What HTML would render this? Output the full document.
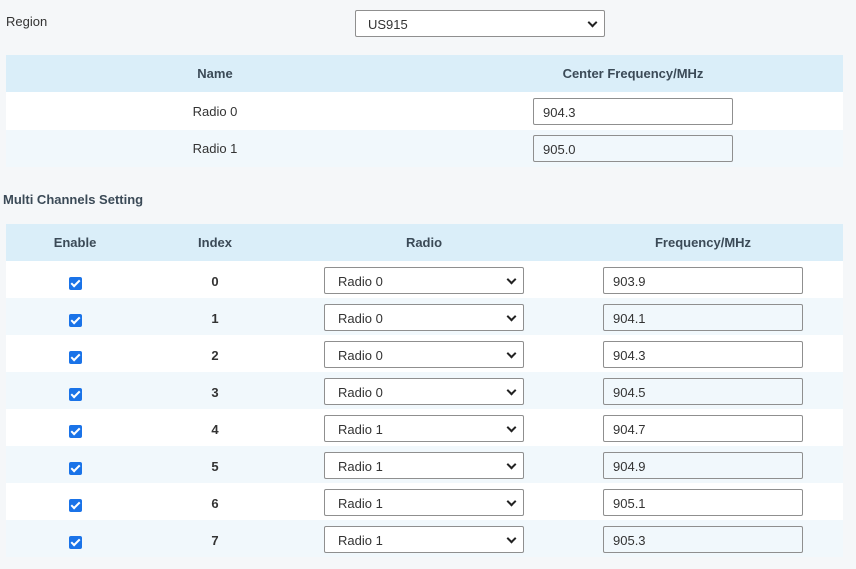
<!DOCTYPE html>
<html><head><style>
body{margin:0;width:856px;height:569px;background:#f5f7f9;font-family:"Liberation Sans",sans-serif;font-size:13px;color:#333;position:relative;overflow:hidden}
.a{position:absolute}
.hd{background:#daeef9;font-weight:bold;color:#3b4a57}
.w{background:#fff}.l{background:#f1f8fc}
.c{position:absolute;transform:translateX(-50%);white-space:nowrap}
.in{position:absolute;box-sizing:border-box;border:1px solid #8f8f8f;border-radius:2px;height:27px;padding:6px 0 0 9px;width:200px}
.sel{position:absolute;box-sizing:border-box;border:1px solid #8f8f8f;border-radius:2px;height:27px;padding:6px 0 0 13px;width:200px;background:#fff}
.sel:after{content:"";position:absolute;right:8px;top:8px;width:5px;height:5px;border-right:2px solid #222;border-bottom:2px solid #222;transform:rotate(45deg)}
.cb{position:absolute;left:69px;width:13px;height:13px;background:#1a73e8;border-radius:2px}
.cb:after{content:"";position:absolute;left:4px;top:1px;width:3px;height:7px;border-right:2px solid #fff;border-bottom:2px solid #fff;transform:rotate(45deg)}
.b{font-weight:bold}
</style></head><body>
<div class="a" style="left:6px;top:14px">Region</div>
<div class="sel" style="left:355px;top:10px;width:250px;padding-left:12px">US915</div>

<div class="a hd" style="left:6px;top:55px;width:837px;height:37px"></div>
<div class="c hd" style="left:215px;top:66px;background:none">Name</div>
<div class="c hd" style="left:633px;top:66px;background:none">Center Frequency/MHz</div>
<div class="a w" style="left:6px;top:92px;width:837px;height:38px"></div>
<div class="a l" style="left:6px;top:130px;width:837px;height:37px"></div>
<div class="c" style="left:215px;top:104px">Radio 0</div>
<div class="c" style="left:215px;top:141px">Radio 1</div>
<div class="in" style="left:533px;top:98px;background:#fff">904.3</div>
<div class="in" style="left:533px;top:135px">905.0</div>

<div class="a b" style="left:3px;top:192px;color:#3b4a57">Multi Channels Setting</div>

<div class="a hd" style="left:6px;top:224px;width:837px;height:37px"></div>
<div class="c hd" style="left:75px;top:235px;background:none">Enable</div>
<div class="c hd" style="left:215px;top:235px;background:none">Index</div>
<div class="c hd" style="left:424px;top:235px;background:none">Radio</div>
<div class="c hd" style="left:703px;top:235px;background:none">Frequency/MHz</div>

<div class="a w" style="left:6px;top:261px;width:837px;height:37px"></div>
<div class="a l" style="left:6px;top:298px;width:837px;height:37px"></div>
<div class="a w" style="left:6px;top:335px;width:837px;height:37px"></div>
<div class="a l" style="left:6px;top:372px;width:837px;height:37px"></div>
<div class="a w" style="left:6px;top:409px;width:837px;height:37px"></div>
<div class="a l" style="left:6px;top:446px;width:837px;height:37px"></div>
<div class="a w" style="left:6px;top:483px;width:837px;height:37px"></div>
<div class="a l" style="left:6px;top:520px;width:837px;height:37px"></div>

<div class="cb" style="top:277px"></div><div class="c b" style="left:215px;top:274px">0</div><div class="sel" style="left:324px;top:267px">Radio 0</div><div class="in" style="left:603px;top:267px;background:#fff">903.9</div>
<div class="cb" style="top:314px"></div><div class="c b" style="left:215px;top:311px">1</div><div class="sel" style="left:324px;top:304px">Radio 0</div><div class="in" style="left:603px;top:304px">904.1</div>
<div class="cb" style="top:351px"></div><div class="c b" style="left:215px;top:348px">2</div><div class="sel" style="left:324px;top:341px">Radio 0</div><div class="in" style="left:603px;top:341px;background:#fff">904.3</div>
<div class="cb" style="top:388px"></div><div class="c b" style="left:215px;top:385px">3</div><div class="sel" style="left:324px;top:378px">Radio 0</div><div class="in" style="left:603px;top:378px">904.5</div>
<div class="cb" style="top:425px"></div><div class="c b" style="left:215px;top:422px">4</div><div class="sel" style="left:324px;top:415px">Radio 1</div><div class="in" style="left:603px;top:415px;background:#fff">904.7</div>
<div class="cb" style="top:462px"></div><div class="c b" style="left:215px;top:459px">5</div><div class="sel" style="left:324px;top:452px">Radio 1</div><div class="in" style="left:603px;top:452px">904.9</div>
<div class="cb" style="top:499px"></div><div class="c b" style="left:215px;top:496px">6</div><div class="sel" style="left:324px;top:489px">Radio 1</div><div class="in" style="left:603px;top:489px;background:#fff">905.1</div>
<div class="cb" style="top:536px"></div><div class="c b" style="left:215px;top:533px">7</div><div class="sel" style="left:324px;top:526px">Radio 1</div><div class="in" style="left:603px;top:526px">905.3</div>
</body></html>
